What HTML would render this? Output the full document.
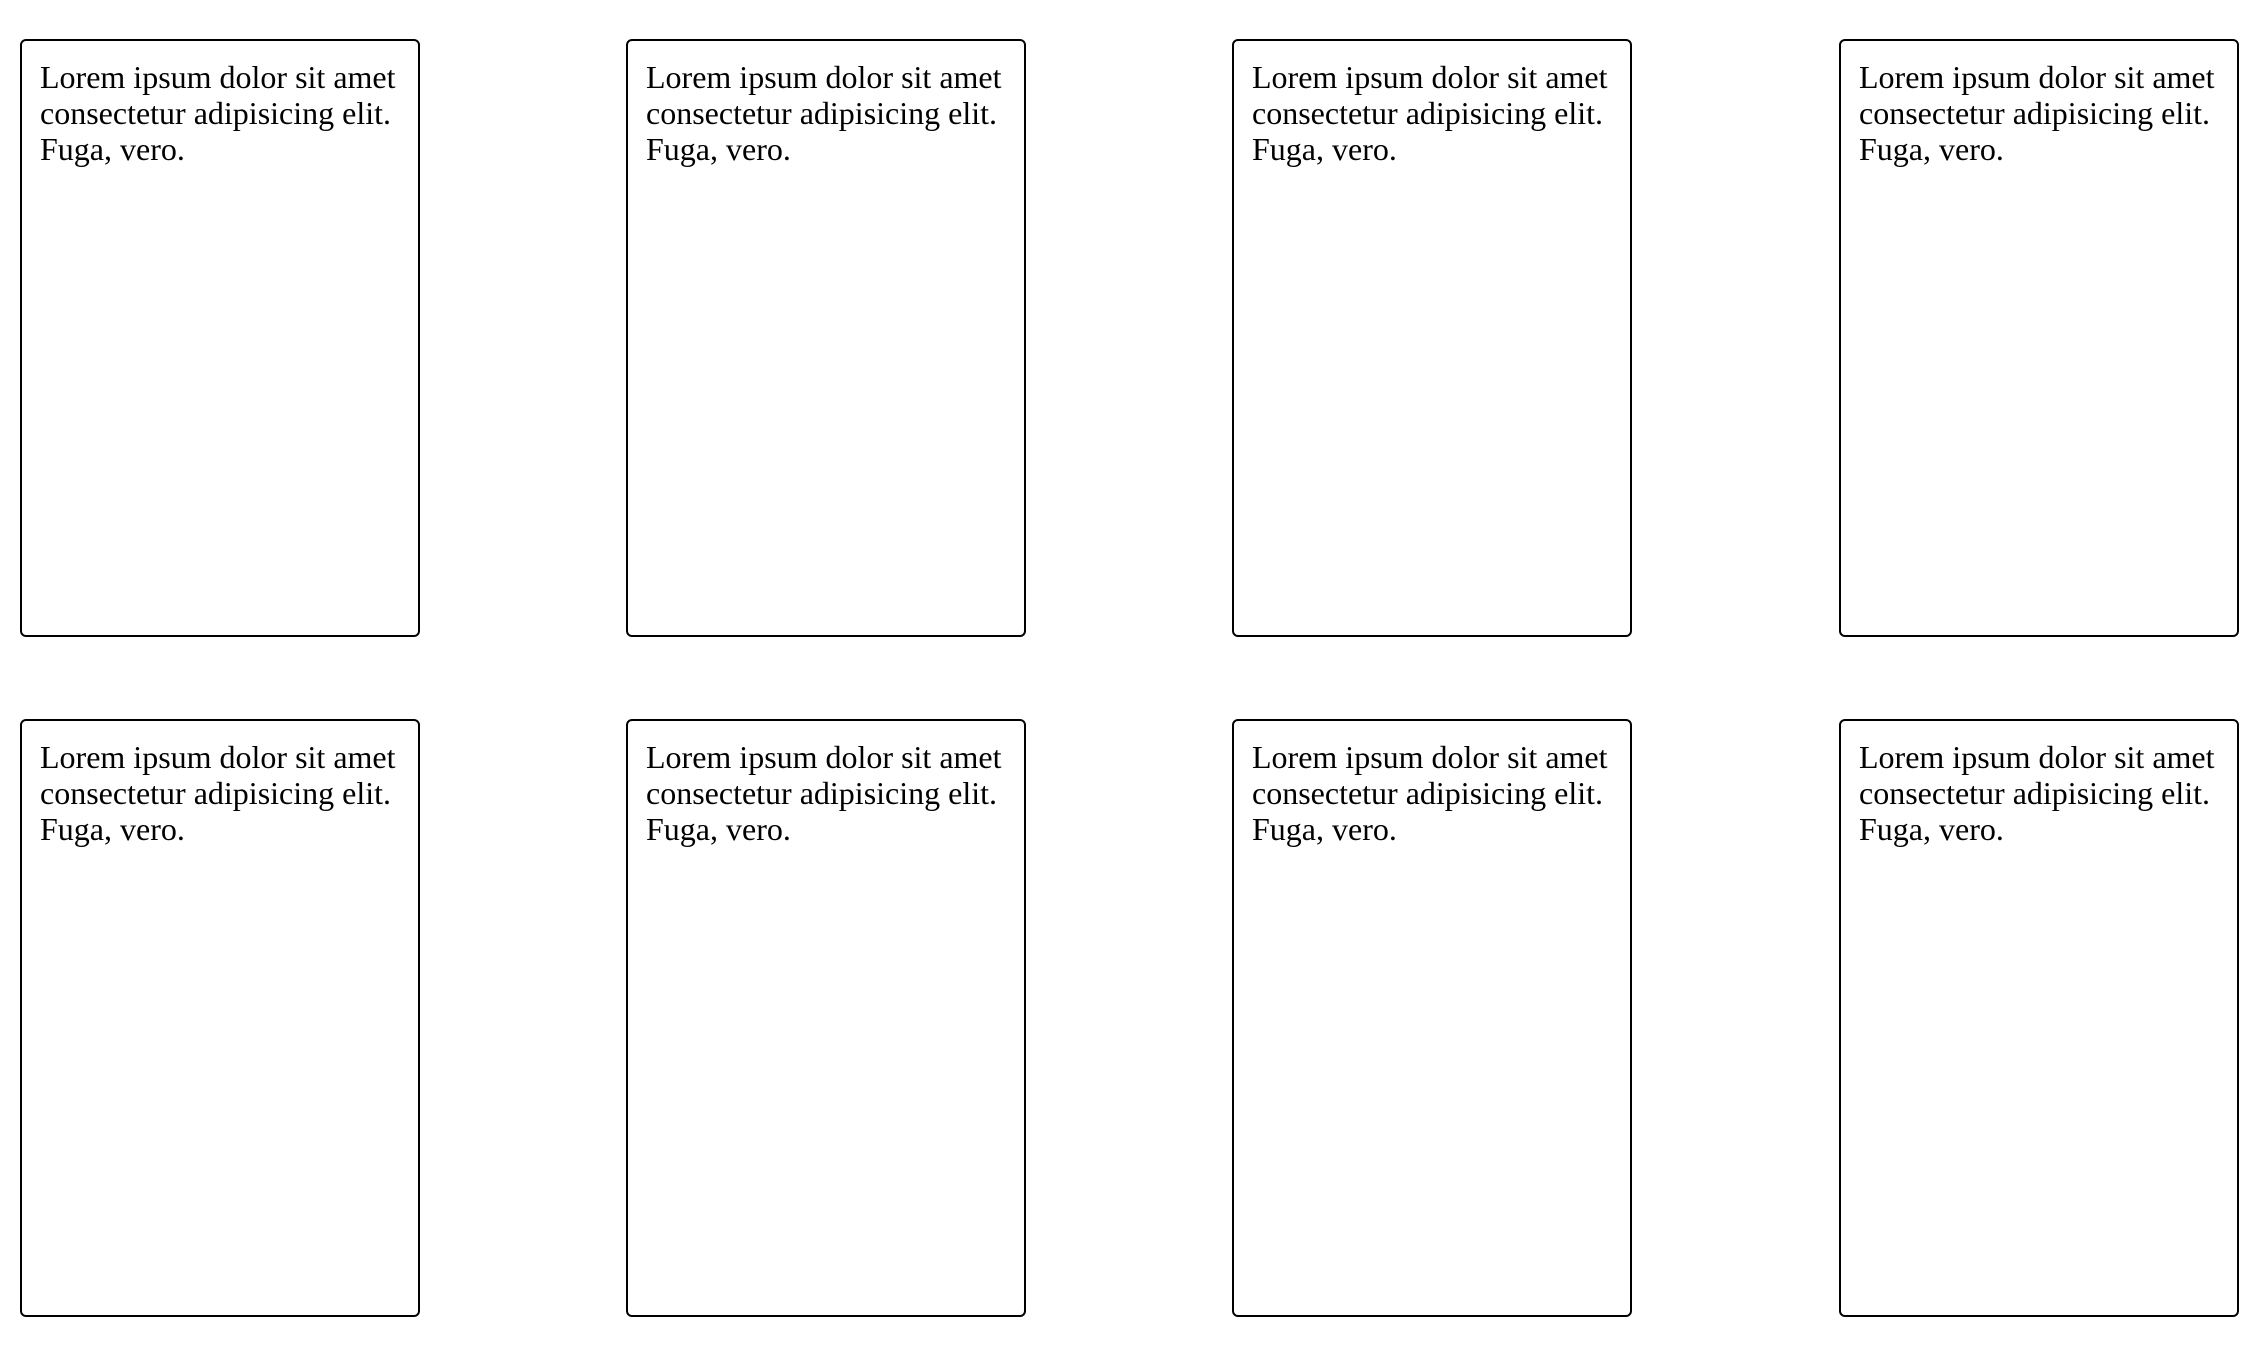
<!DOCTYPE html>
<html><head><style>
html,body{margin:0;padding:0;background:#fff;width:2268px;height:1348px;overflow:hidden}
.c{position:absolute;width:396px;height:594px;border:2px solid #000;border-radius:6px;box-sizing:content-box;
font-family:"Liberation Serif",serif;font-size:32px;line-height:36px;color:#000;padding:0}
.c p{margin:0;position:absolute;left:18px;top:18px;width:378px}
</style></head><body>
<div class="c" style="left:20px;top:39px"><p>Lorem ipsum dolor sit amet consectetur adipisicing elit. Fuga, vero.</p></div>
<div class="c" style="left:626px;top:39px"><p>Lorem ipsum dolor sit amet consectetur adipisicing elit. Fuga, vero.</p></div>
<div class="c" style="left:1232px;top:39px"><p>Lorem ipsum dolor sit amet consectetur adipisicing elit. Fuga, vero.</p></div>
<div class="c" style="left:1839px;top:39px"><p>Lorem ipsum dolor sit amet consectetur adipisicing elit. Fuga, vero.</p></div>
<div class="c" style="left:20px;top:719px"><p>Lorem ipsum dolor sit amet consectetur adipisicing elit. Fuga, vero.</p></div>
<div class="c" style="left:626px;top:719px"><p>Lorem ipsum dolor sit amet consectetur adipisicing elit. Fuga, vero.</p></div>
<div class="c" style="left:1232px;top:719px"><p>Lorem ipsum dolor sit amet consectetur adipisicing elit. Fuga, vero.</p></div>
<div class="c" style="left:1839px;top:719px"><p>Lorem ipsum dolor sit amet consectetur adipisicing elit. Fuga, vero.</p></div>
</body></html>
